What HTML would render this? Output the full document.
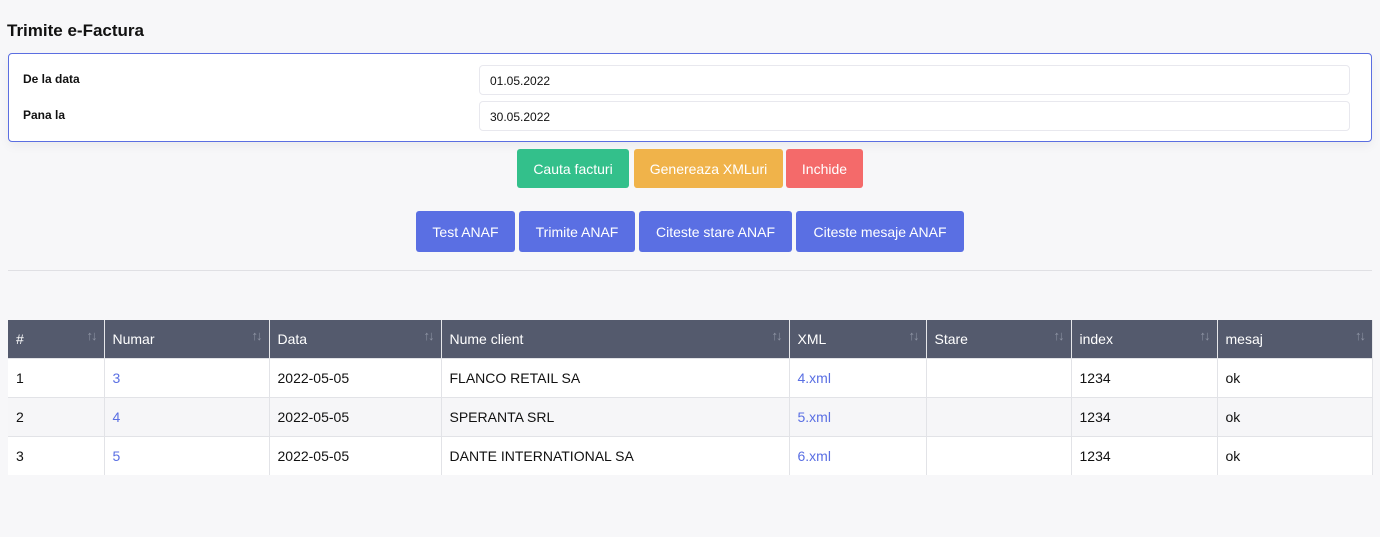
<!DOCTYPE html>
<html><head><style>
*{box-sizing:border-box;margin:0;padding:0}
body{width:1380px;height:537px;background:#f7f7f9;font-family:"Liberation Sans",sans-serif;position:relative;overflow:hidden}
.a{position:absolute}
h1{position:absolute;left:7px;top:21px;font-size:17px;font-weight:bold;color:#111}
.panel{left:8px;top:53px;width:1364px;height:89px;background:#fff;border:1px solid #5b6ee1;border-radius:4px;box-shadow:0 4px 10px rgba(0,0,0,.05)}
.lbl{font-size:12px;font-weight:bold;color:#111}
.inp{left:479px;width:871px;height:30px;border:1px solid #e8e8ee;border-radius:4px;font-size:12px;padding:8px 10px;color:#111;background:#fff}
.btn{position:absolute;color:#fff;font-size:14px;border-radius:3px;display:flex;align-items:center;justify-content:center}
.g{background:#33c08b}.o{background:#f0b34a}.r{background:#f46a6a}.b{background:#5a6fe3}
table{position:absolute;left:8px;top:320px;width:1365px;border-collapse:collapse;font-size:14px}
th{background:#545a6d;color:#fff;font-weight:normal;text-align:left;height:38px;padding:0 8px;border-right:1px solid #e6e7ea;position:relative}
th span{position:absolute;right:8px;top:8px;color:#8e94a4;font-size:13px;letter-spacing:-2px}
td{height:39px;padding:0 8px;border-right:1px solid #e2e3e7;border-top:1px solid #e2e3e7;color:#111;background:#fff}
tr.s td{background:#f6f6f8}
a{color:#5a6fe3;text-decoration:none}
</style></head><body>
<h1>Trimite e-Factura</h1>
<div class="a panel"></div>
<div class="a lbl" style="left:23px;top:72px">De la data</div>
<div class="a lbl" style="left:23px;top:108px">Pana la</div>
<div class="a inp" style="top:65px">01.05.2022</div>
<div class="a inp" style="top:101px">30.05.2022</div>
<div class="btn g" style="left:517px;top:149px;width:112px;height:39px">Cauta facturi</div>
<div class="btn o" style="left:634px;top:149px;width:149px;height:39px">Genereaza XMLuri</div>
<div class="btn r" style="left:786px;top:149px;width:77px;height:39px">Inchide</div>
<div class="btn b" style="left:416px;top:211px;width:99px;height:41px">Test ANAF</div>
<div class="btn b" style="left:519px;top:211px;width:116px;height:41px">Trimite ANAF</div>
<div class="btn b" style="left:639px;top:211px;width:153px;height:41px">Citeste stare ANAF</div>
<div class="btn b" style="left:796px;top:211px;width:168px;height:41px">Citeste mesaje ANAF</div>
<div class="a" style="left:8px;top:270px;width:1364px;height:1px;background:#e0e0e4"></div>
<table>
<tr><th style="width:96px"># <span>↑↓</span></th><th style="width:165px">Numar<span>↑↓</span></th><th style="width:172px">Data<span>↑↓</span></th><th style="width:348px">Nume client<span>↑↓</span></th><th style="width:137px">XML<span>↑↓</span></th><th style="width:145px">Stare<span>↑↓</span></th><th style="width:146px">index<span>↑↓</span></th><th>mesaj<span>↑↓</span></th></tr>
<tr><td>1</td><td><a>3</a></td><td>2022-05-05</td><td>FLANCO RETAIL SA</td><td><a>4.xml</a></td><td></td><td>1234</td><td>ok</td></tr>
<tr class="s"><td>2</td><td><a>4</a></td><td>2022-05-05</td><td>SPERANTA SRL</td><td><a>5.xml</a></td><td></td><td>1234</td><td>ok</td></tr>
<tr><td>3</td><td><a>5</a></td><td>2022-05-05</td><td>DANTE INTERNATIONAL SA</td><td><a>6.xml</a></td><td></td><td>1234</td><td>ok</td></tr>
</table>
</body></html>
